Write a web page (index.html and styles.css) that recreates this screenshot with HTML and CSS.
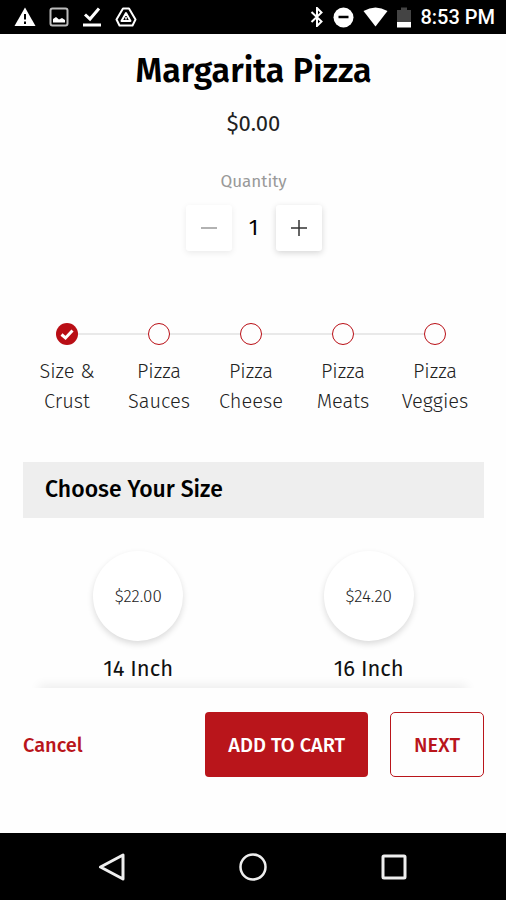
FILE: index.html
```html
<!DOCTYPE html>
<html lang="en">
<head>
    <meta charset="UTF-8">
    <meta name="viewport" content="width=device-width, initial-scale=1">
    <title>Margarita Pizza</title>
    <link rel="stylesheet" href="styles.css">
</head>
<body>

    <!-- Status bar -->
    <header class="status-bar">
        <div class="status-group">
            <svg width="22" height="20" viewBox="0 0 22 20" aria-hidden="true">
                <path d="M11 0.5L21.5 19H0.500Z" fill="#fff"/>
                <path d="M11 7V12.500M11 14.500V17" stroke="#000" stroke-width="2"/>
            </svg>
            <svg width="20" height="20" viewBox="0 0 20 20" aria-hidden="true">
                <rect x="1.500" y="1.500" width="17" height="17" rx="2" fill="none" stroke="#bbb" stroke-width="2"/>
                <path d="M4 15.500V12L7 10L10 12.500L13 11L16 13V15.500Z" fill="#fff"/>
            </svg>
            <svg width="20" height="20" viewBox="0 0 20 20" aria-hidden="true">
                <path d="M3 7.500L8 12L17 1.500" fill="none" stroke="#fff" stroke-width="3"/>
                <path d="M1 18H19" stroke="#fff" stroke-width="3"/>
            </svg>
            <svg width="22" height="20" viewBox="0 0 22 20" aria-hidden="true">
                <path d="M8 1.500H14L20.500 12.500L17.500 18.500H4.500L1.500 12.500Z" fill="none" stroke="#fff" stroke-width="2" stroke-linejoin="round"/>
                <path d="M11 6L15.500 14H6.500Z" fill="none" stroke="#fff" stroke-width="2" stroke-linejoin="round"/>
                <path d="M11 10V12.500" stroke="#fff" stroke-width="1.500"/>
            </svg>
        </div>
        <div class="status-group status-right">
            <svg width="14" height="20" viewBox="0 0 14 20" aria-hidden="true">
                <path d="M1.500 5L11.500 14.500L7 19V1L11.500 5.500L1.500 15" fill="none" stroke="#fff" stroke-width="2"/>
            </svg>
            <svg width="21" height="21" viewBox="0 0 21 21" aria-hidden="true">
                <circle cx="10.500" cy="10.500" r="10" fill="#fff"/>
                <path d="M5.500 10H15.500" stroke="#000" stroke-width="2.500"/>
            </svg>
            <svg width="25" height="20" viewBox="0 0 25 20" aria-hidden="true">
                <path d="M0.500 4Q12.500 -3 24.500 4L12.500 19.500Z" fill="#fff"/>
            </svg>
            <svg width="14" height="21" viewBox="0 0 14 21" aria-hidden="true">
                <path d="M0 3H4V0.500H10V3H14V15H0Z" fill="#444"/>
                <path d="M0 15H14V20.500H0Z" fill="#fff"/>
            </svg>
            <span class="clock">8:53 PM</span>
        </div>
    </header>

    <main class="content">
        <h1 class="title">Margarita Pizza</h1>
        <p class="price">$0.00</p>

        <!-- Quantity -->
        <p class="quantity-label" id="quantityLabel">Quantity</p>
        <div class="quantity" role="group" aria-labelledby="quantityLabel">
            <button class="quantity-button" type="button" aria-label="Decrease" disabled>
                <svg width="18" height="18" viewBox="0 0 18 18" aria-hidden="true">
                    <path d="M1 9H17" stroke="currentColor" stroke-width="1.500"/>
                </svg>
            </button>
            <output class="quantity-value">1</output>
            <button class="quantity-button" type="button" aria-label="Increase">
                <svg width="18" height="18" viewBox="0 0 18 18" aria-hidden="true">
                    <path d="M1 9H17M9 1V17" stroke="currentColor" stroke-width="1.500"/>
                </svg>
            </button>
        </div>

        <!-- Steps -->
        <ol class="steps">
            <li class="step">
                <span class="step-marker">
                    <svg width="22" height="22" viewBox="0 0 22 22" aria-hidden="true">
                        <circle cx="11" cy="11" r="11" fill="#b90e15"/>
                        <path d="M5.500 11.500L9.500 15L16.500 7.500" fill="none" stroke="#fff" stroke-width="3"/>
                    </svg>
                </span>
                <span class="step-name">Size &amp; Crust</span>
            </li>
            <li class="step">
                <span class="step-marker"><span class="step-circle"></span></span>
                <span class="step-name">Pizza Sauces</span>
            </li>
            <li class="step">
                <span class="step-marker"><span class="step-circle"></span></span>
                <span class="step-name">Pizza Cheese</span>
            </li>
            <li class="step">
                <span class="step-marker"><span class="step-circle"></span></span>
                <span class="step-name">Pizza Meats</span>
            </li>
            <li class="step">
                <span class="step-marker"><span class="step-circle"></span></span>
                <span class="step-name">Pizza Veggies</span>
            </li>
        </ol>

        <!-- Sizes -->
        <h2 class="section-title">Choose Your Size</h2>
        <div class="sizes">
            <button class="size" type="button">
                <span class="size-price">$22.00</span>
                <span class="size-name">14 Inch</span>
            </button>
            <button class="size" type="button">
                <span class="size-price">$24.20</span>
                <span class="size-name">16 Inch</span>
            </button>
        </div>
    </main>

    <div class="actions">
        <button class="cancel" type="button">Cancel</button>
        <button class="add" type="button">ADD TO CART</button>
        <button class="next" type="button">NEXT</button>
    </div>

    <!-- Android navigation -->
    <nav class="nav-bar">
        <button class="nav-button" type="button" aria-label="Back">
            <svg width="28" height="28" viewBox="0 0 28 28" aria-hidden="true">
                <path d="M25 2V26L2.500 14Z" fill="none" stroke="#eee" stroke-width="3" stroke-linejoin="round"/>
            </svg>
        </button>
        <button class="nav-button" type="button" aria-label="Home">
            <svg width="28" height="28" viewBox="0 0 28 28" aria-hidden="true">
                <circle cx="14" cy="14" r="12.500" fill="none" stroke="#eee" stroke-width="2.500"/>
            </svg>
        </button>
        <button class="nav-button" type="button" aria-label="Overview">
            <svg width="28" height="28" viewBox="0 0 28 28" aria-hidden="true">
                <rect x="3" y="3" width="22" height="22" rx="1" fill="none" stroke="#eee" stroke-width="3"/>
            </svg>
        </button>
    </nav>

</body>
</html>
```

FILE: styles.css
```css
* {
    box-sizing: border-box;
}
body {
    margin: 0;
    min-height: 100vh;
    display: flex;
    flex-direction: column;
    font-family: "Fira Sans", "Noto Sans", sans-serif;
    background-color: #fefefe;
    color: #111;
}
button {
    padding: 0;
    border: none;
    background: none;
    font-family: inherit;
    color: inherit;
    cursor: pointer;
}
svg {
    display: block;
}
.status-bar {
    display: flex;
    justify-content: space-between;
    align-items: center;
    height: 34px;
    padding: 0 11px 0 14px;
    background-color: #000;
}
.status-group {
    display: flex;
    align-items: center;
    gap: 13px;
}
.status-right {
    gap: 9px;
}
.clock {
    font-family: Roboto, sans-serif;
    font-size: 20px;
    font-weight: 500;
    color: #fff;
}
.content {
    flex: 1;
    padding: 17px 22px 0 23px;
}
.title {
    margin: 0;
    font-size: 34px;
    line-height: 40px;
    font-weight: 600;
    text-align: center;
    color: #000;
}
.price {
    margin: 18px 0 0;
    font-size: 22px;
    line-height: 30px;
    text-align: center;
    color: #222;
}
.quantity-label {
    margin: 31px 0 0;
    font-size: 17px;
    line-height: 24px;
    text-align: center;
    color: #999;
}
.quantity {
    display: flex;
    justify-content: center;
    align-items: center;
    margin-top: 11px;
}
.quantity-button {
    display: flex;
    justify-content: center;
    align-items: center;
    width: 46px;
    height: 46px;
    border-radius: 3px;
    background-color: #fff;
    color: #333;
    box-shadow: 0 2px 6px rgba(0, 0, 0, 0.16);
}
.quantity-button:disabled {
    color: #999;
    box-shadow: 0 2px 6px rgba(0, 0, 0, 0.08);
    cursor: default;
}
.quantity-value {
    width: 44px;
    font-size: 22px;
    line-height: 30px;
    text-align: center;
    color: #000;
}
.steps {
    display: grid;
    grid-template-columns: repeat(5, 1fr);
    margin: 72px 3px 0 -2px;
    padding: 0;
    list-style: none;
}
.step-marker {
    display: flex;
    align-items: center;
}
.step-marker::before,
.step-marker::after {
    content: "";
    flex: 1;
    height: 2px;
    background-color: #e9e9e9;
}
.step:first-child .step-marker::before,
.step:last-child .step-marker::after {
    background-color: transparent;
}
.step-circle {
    width: 22px;
    height: 22px;
    border: 1px solid #b90e15;
    border-radius: 50%;
}
.step-name {
    display: block;
    margin-top: 11px;
    padding: 0 10px;
    font-size: 20px;
    line-height: 30px;
    font-weight: 300;
    text-align: center;
    color: #222;
}
.section-title {
    margin: 46px 0 0;
    padding: 12px 22px 14px;
    font-size: 23px;
    line-height: 30px;
    font-weight: 500;
    background-color: #eee;
    color: #000;
}
.sizes {
    display: grid;
    grid-template-columns: 1fr 1fr;
    padding-top: 33px;
}
.size {
    display: flex;
    flex-direction: column;
    align-items: center;
}
.size-price {
    display: flex;
    justify-content: center;
    align-items: center;
    width: 90px;
    height: 90px;
    border-radius: 50%;
    font-size: 17px;
    font-weight: 300;
    background-color: #fff;
    color: #222;
    box-shadow: 0 3px 6px rgba(0, 0, 0, 0.14);
}
.size-name {
    margin-top: 13px;
    font-size: 22px;
    line-height: 30px;
}
.actions {
    display: flex;
    align-items: center;
    gap: 22px;
    padding: 24px 22px 56px 23px;
    background-color: #fefefe;
    box-shadow: 0 -42px 10px -39px rgba(0, 0, 0, 0.07);
}
.cancel,
.add,
.next {
    height: 65px;
    font-size: 20px;
    font-weight: 500;
    color: #b9151b;
}
.cancel {
    margin-right: auto;
}
.add {
    padding: 0 23px;
    border-radius: 4px;
    background-color: #b9151b;
    color: #fff;
}
.next {
    padding: 0 23px;
    border: 1px solid #b9151b;
    border-radius: 5px;
}
.nav-bar {
    display: flex;
    justify-content: center;
    align-items: center;
    gap: 113px;
    height: 67px;
    background-color: #000;
}
```
